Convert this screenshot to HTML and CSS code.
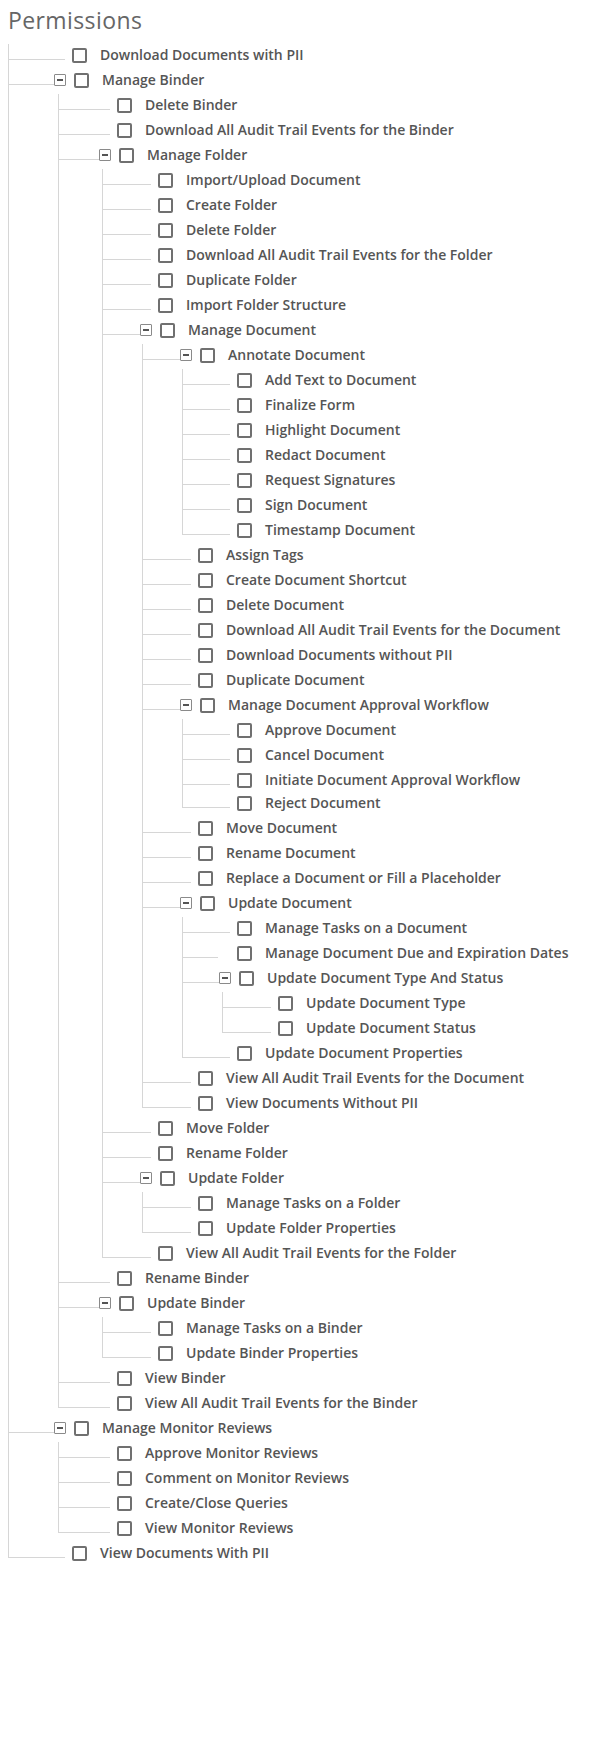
FILE: index.html
```html
<!DOCTYPE html>
<html lang="en">
<head>
<meta charset="utf-8">
<title>Permissions</title>
<link rel="stylesheet" href="styles.css">
</head>
<body>
<h1 class="title">Permissions</h1>
<ul class="tree lv0">
  <li class="node"><div class="row"><span class="conn"></span><span class="cb"></span><span class="label">Download Documents with PII</span></div></li>
  <li class="node parent"><div class="row"><span class="conn"></span><span class="tog"><span class="minus"></span></span><span class="cb"></span><span class="label">Manage Binder</span></div>
    <ul class="tree lv1">
      <li class="node"><div class="row"><span class="conn"></span><span class="cb"></span><span class="label">Delete Binder</span></div></li>
      <li class="node"><div class="row"><span class="conn"></span><span class="cb"></span><span class="label">Download All Audit Trail Events for the Binder</span></div></li>
      <li class="node parent"><div class="row"><span class="conn"></span><span class="tog"><span class="minus"></span></span><span class="cb"></span><span class="label">Manage Folder</span></div>
        <ul class="tree lv2">
          <li class="node"><div class="row"><span class="conn"></span><span class="cb"></span><span class="label">Import/Upload Document</span></div></li>
          <li class="node"><div class="row"><span class="conn"></span><span class="cb"></span><span class="label">Create Folder</span></div></li>
          <li class="node"><div class="row"><span class="conn"></span><span class="cb"></span><span class="label">Delete Folder</span></div></li>
          <li class="node"><div class="row"><span class="conn"></span><span class="cb"></span><span class="label">Download All Audit Trail Events for the Folder</span></div></li>
          <li class="node"><div class="row"><span class="conn"></span><span class="cb"></span><span class="label">Duplicate Folder</span></div></li>
          <li class="node"><div class="row"><span class="conn"></span><span class="cb"></span><span class="label">Import Folder Structure</span></div></li>
          <li class="node parent"><div class="row"><span class="conn"></span><span class="tog"><span class="minus"></span></span><span class="cb"></span><span class="label">Manage Document</span></div>
            <ul class="tree lv3">
              <li class="node parent"><div class="row"><span class="conn"></span><span class="tog"><span class="minus"></span></span><span class="cb"></span><span class="label">Annotate Document</span></div>
                <ul class="tree lv4">
                  <li class="node"><div class="row"><span class="conn"></span><span class="cb"></span><span class="label">Add Text to Document</span></div></li>
                  <li class="node"><div class="row"><span class="conn"></span><span class="cb"></span><span class="label">Finalize Form</span></div></li>
                  <li class="node"><div class="row"><span class="conn"></span><span class="cb"></span><span class="label">Highlight Document</span></div></li>
                  <li class="node"><div class="row"><span class="conn"></span><span class="cb"></span><span class="label">Redact Document</span></div></li>
                  <li class="node"><div class="row"><span class="conn"></span><span class="cb"></span><span class="label">Request Signatures</span></div></li>
                  <li class="node"><div class="row"><span class="conn"></span><span class="cb"></span><span class="label">Sign Document</span></div></li>
                  <li class="node"><div class="row"><span class="conn"></span><span class="cb"></span><span class="label">Timestamp Document</span></div></li>
                </ul>
              </li>
              <li class="node"><div class="row"><span class="conn"></span><span class="cb"></span><span class="label">Assign Tags</span></div></li>
              <li class="node"><div class="row"><span class="conn"></span><span class="cb"></span><span class="label">Create Document Shortcut</span></div></li>
              <li class="node"><div class="row"><span class="conn"></span><span class="cb"></span><span class="label">Delete Document</span></div></li>
              <li class="node"><div class="row"><span class="conn"></span><span class="cb"></span><span class="label">Download All Audit Trail Events for the Document</span></div></li>
              <li class="node"><div class="row"><span class="conn"></span><span class="cb"></span><span class="label">Download Documents without PII</span></div></li>
              <li class="node"><div class="row"><span class="conn"></span><span class="cb"></span><span class="label">Duplicate Document</span></div></li>
              <li class="node parent"><div class="row"><span class="conn"></span><span class="tog"><span class="minus"></span></span><span class="cb"></span><span class="label">Manage Document Approval Workflow</span></div>
                <ul class="tree lv4">
                  <li class="node"><div class="row"><span class="conn"></span><span class="cb"></span><span class="label">Approve Document</span></div></li>
                  <li class="node"><div class="row"><span class="conn"></span><span class="cb"></span><span class="label">Cancel Document</span></div></li>
                  <li class="node"><div class="row"><span class="conn"></span><span class="cb"></span><span class="label">Initiate Document Approval Workflow</span></div></li>
                  <li class="node"><div class="row row-tight"><span class="conn"></span><span class="cb"></span><span class="label">Reject Document</span></div></li>
                </ul>
              </li>
              <li class="node"><div class="row"><span class="conn"></span><span class="cb"></span><span class="label">Move Document</span></div></li>
              <li class="node"><div class="row"><span class="conn"></span><span class="cb"></span><span class="label">Rename Document</span></div></li>
              <li class="node"><div class="row"><span class="conn"></span><span class="cb"></span><span class="label">Replace a Document or Fill a Placeholder</span></div></li>
              <li class="node parent"><div class="row"><span class="conn"></span><span class="tog"><span class="minus"></span></span><span class="cb"></span><span class="label">Update Document</span></div>
                <ul class="tree lv4">
                  <li class="node"><div class="row"><span class="conn"></span><span class="cb"></span><span class="label">Manage Tasks on a Document</span></div></li>
                  <li class="node"><div class="row"><span class="conn short"></span><span class="cb"></span><span class="label">Manage Document Due and Expiration Dates</span></div></li>
                  <li class="node parent"><div class="row"><span class="conn"></span><span class="tog"><span class="minus"></span></span><span class="cb"></span><span class="label">Update Document Type And Status</span></div>
                    <ul class="tree lv5">
                      <li class="node"><div class="row"><span class="conn"></span><span class="cb"></span><span class="label">Update Document Type</span></div></li>
                      <li class="node"><div class="row"><span class="conn"></span><span class="cb"></span><span class="label">Update Document Status</span></div></li>
                    </ul>
                  </li>
                  <li class="node"><div class="row"><span class="conn"></span><span class="cb"></span><span class="label">Update Document Properties</span></div></li>
                </ul>
              </li>
              <li class="node"><div class="row"><span class="conn"></span><span class="cb"></span><span class="label">View All Audit Trail Events for the Document</span></div></li>
              <li class="node"><div class="row"><span class="conn"></span><span class="cb"></span><span class="label">View Documents Without PII</span></div></li>
            </ul>
          </li>
          <li class="node"><div class="row"><span class="conn"></span><span class="cb"></span><span class="label">Move Folder</span></div></li>
          <li class="node"><div class="row"><span class="conn"></span><span class="cb"></span><span class="label">Rename Folder</span></div></li>
          <li class="node parent"><div class="row"><span class="conn"></span><span class="tog"><span class="minus"></span></span><span class="cb"></span><span class="label">Update Folder</span></div>
            <ul class="tree lv3">
              <li class="node"><div class="row"><span class="conn"></span><span class="cb"></span><span class="label">Manage Tasks on a Folder</span></div></li>
              <li class="node"><div class="row"><span class="conn"></span><span class="cb"></span><span class="label">Update Folder Properties</span></div></li>
            </ul>
          </li>
          <li class="node"><div class="row"><span class="conn"></span><span class="cb"></span><span class="label">View All Audit Trail Events for the Folder</span></div></li>
        </ul>
      </li>
      <li class="node"><div class="row"><span class="conn"></span><span class="cb"></span><span class="label">Rename Binder</span></div></li>
      <li class="node parent"><div class="row"><span class="conn"></span><span class="tog"><span class="minus"></span></span><span class="cb"></span><span class="label">Update Binder</span></div>
        <ul class="tree lv2">
          <li class="node"><div class="row"><span class="conn"></span><span class="cb"></span><span class="label">Manage Tasks on a Binder</span></div></li>
          <li class="node"><div class="row"><span class="conn"></span><span class="cb"></span><span class="label">Update Binder Properties</span></div></li>
        </ul>
      </li>
      <li class="node"><div class="row"><span class="conn"></span><span class="cb"></span><span class="label">View Binder</span></div></li>
      <li class="node"><div class="row"><span class="conn"></span><span class="cb"></span><span class="label">View All Audit Trail Events for the Binder</span></div></li>
    </ul>
  </li>
  <li class="node parent"><div class="row"><span class="conn"></span><span class="tog"><span class="minus"></span></span><span class="cb"></span><span class="label">Manage Monitor Reviews</span></div>
    <ul class="tree lv1">
      <li class="node"><div class="row"><span class="conn"></span><span class="cb"></span><span class="label">Approve Monitor Reviews</span></div></li>
      <li class="node"><div class="row"><span class="conn"></span><span class="cb"></span><span class="label">Comment on Monitor Reviews</span></div></li>
      <li class="node"><div class="row"><span class="conn"></span><span class="cb"></span><span class="label">Create/Close Queries</span></div></li>
      <li class="node"><div class="row"><span class="conn"></span><span class="cb"></span><span class="label">View Monitor Reviews</span></div></li>
    </ul>
  </li>
  <li class="node"><div class="row"><span class="conn"></span><span class="cb"></span><span class="label">View Documents With PII</span></div></li>
</ul>
</body>
</html>
```
FILE: styles.css
```css
html, body {
  background: #ffffff;
}
body {
  margin: 8px;
  font-family: "Open Sans", "Liberation Sans", sans-serif;
  color: #555555;
}
.title {
  margin: 0 0 11px 0;
  font-size: 23px;
  line-height: 24px;
  font-weight: 400;
  letter-spacing: 0.4px;
  color: #666666;
}
.tree {
  list-style: none;
  margin: 0;
  padding: 0;
}
.lv0 { --wc: 56px; --wt: 45px; padding-top: 1px; }
.lv1 { --wc: 51px; --wt: 40px; margin-left: 49px; }
.lv2 { --wc: 48px; --wt: 37px; margin-left: 43px; }
.lv3 { --wc: 48px; --wt: 37px; margin-left: 39px; }
.lv4 { --wc: 47px; --wt: 36px; margin-left: 39px; }
.lv5 { --wc: 48px; --wt: 36px; margin-left: 39px; }

.lv0 > .node:first-child > .row {
  margin-top: 0;
}
.node {
  border-left: 1px solid #d6d6d6;
}
.node:last-child {
  border-left-color: transparent;
}
.row {
  display: flex;
  align-items: flex-start;
  height: 25px;
}
.row-tight {
  margin-top: -2px;
}
.conn {
  flex: none;
  box-sizing: content-box;
  height: 15px;
  width: var(--wc);
  margin-right: 7px;
  border-bottom: 1px solid #d6d6d6;
}
.conn.short {
  width: calc(var(--wc) - 12px);
  margin-right: 19px;
}
.parent > .row > .conn {
  width: var(--wt);
  margin-right: 0;
}
.node:last-child > .row > .conn {
  margin-left: -1px;
  border-left: 1px solid #d6d6d6;
}
.tog {
  flex: none;
  box-sizing: border-box;
  width: 12px;
  height: 12px;
  margin-top: 5px;
  margin-right: 8px;
  border: 1.5px solid #8a8a8a;
  border-radius: 1px;
  display: flex;
  align-items: center;
  justify-content: center;
  background: #ffffff;
}
.minus {
  width: 6px;
  height: 1.5px;
  background: #555555;
}
.cb {
  flex: none;
  box-sizing: border-box;
  width: 15px;
  height: 15px;
  margin-top: 4px;
  border: 2px solid #707070;
  border-radius: 2px;
  background: #ffffff;
}
.label {
  margin-left: 13px;
  font-size: 14px;
  line-height: 21px;
  font-weight: 600;
  color: #555555;
  white-space: nowrap;
}
```
